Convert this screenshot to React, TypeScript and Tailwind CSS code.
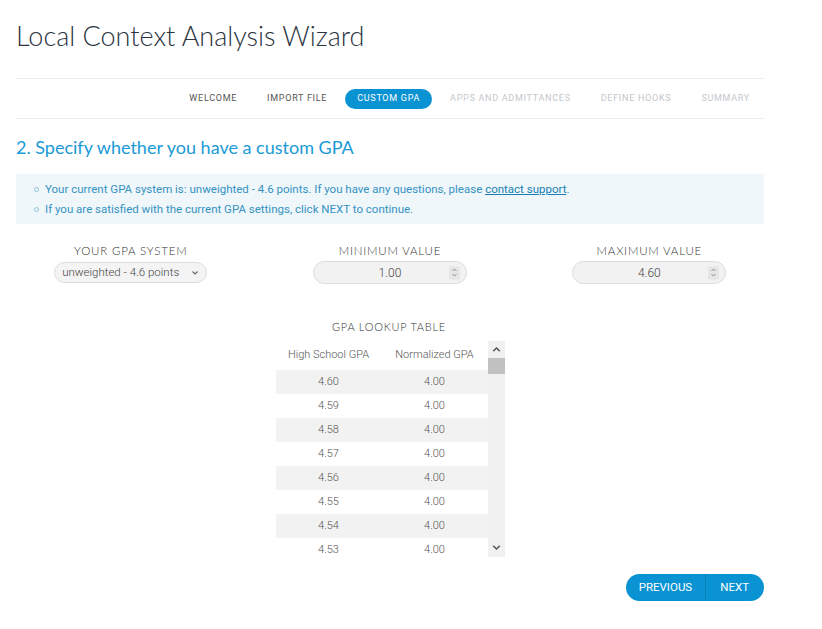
const steps = [
  { label: "WELCOME", state: "done" },
  { label: "IMPORT FILE", state: "done" },
  { label: "CUSTOM GPA", state: "active" },
  { label: "APPS AND ADMITTANCES", state: "todo" },
  { label: "DEFINE HOOKS", state: "todo" },
  { label: "SUMMARY", state: "todo" },
];

const rows = ["4.60", "4.59", "4.58", "4.57", "4.56", "4.55", "4.54", "4.53"];

function Spinner() {
  return (
    <span className="absolute right-[6px] top-1/2 flex h-[13px] w-[11px] -translate-y-1/2 flex-col items-center justify-center bg-[#e6e6e6]">
      <svg width="7" height="10" viewBox="0 0 7 10" fill="none" stroke="#8a8a8a" strokeWidth="1">
        <path d="M1.5 3.5 L3.5 1.5 L5.5 3.5" />
        <path d="M1.5 6.5 L3.5 8.5 L5.5 6.5" />
      </svg>
    </span>
  );
}

function NumberBox({ value }: { value: string }) {
  return (
    <div className="relative mx-auto flex h-[23px] w-[154px] items-center justify-center rounded-full border border-[#dcdcdc] bg-[#f2f2f2] text-[12px] font-light text-[#444]">
      {value}
      <Spinner />
    </div>
  );
}

export default function App() {
  return (
    <div className="min-h-screen w-[822px] bg-white font-['Roboto',sans-serif]">
      <div className="ml-[16px] w-[748px] pt-[21px]">
        <h1 className="font-['Lato',sans-serif] text-[27px] font-light leading-[30px] text-[#2b3340]">
          Local Context Analysis Wizard
        </h1>

        <nav className="mt-[27px] flex h-[41px] items-center justify-end gap-[6px] border-y border-[#ececec] pr-[2px]">
          {steps.map((s) => (
            <span
              key={s.label}
              className={
                s.state === "active"
                  ? "flex h-[20px] items-center rounded-full bg-[#0a93d2] px-[12px] text-[9px] tracking-[0.08em] text-white"
                  : s.state === "done"
                    ? "px-[12px] text-[9px] tracking-[0.08em] text-[#555]"
                    : "px-[12px] text-[9px] tracking-[0.08em] text-[#c3c7cc]"
              }
            >
              {s.label}
            </span>
          ))}
        </nav>

        <h2 className="mt-[16px] font-['Lato',sans-serif] text-[18px] leading-[24px] text-[#1a9ad6]">
          2. Specify whether you have a custom GPA
        </h2>

        <div className="mt-[15px] h-[50px] bg-[#eff7fa] pl-[18px] pt-[5px] text-[11.5px] leading-[20px] text-[#3592c2]">
          <ul>
            <li className="flex h-[20px] items-center gap-[6px]">
              <span className="inline-block h-[5px] w-[5px] rounded-full border border-[#8fc3dc]" />
              <span className="leading-[20px]">
                Your current GPA system is: unweighted - 4.6 points. If you have any questions, please{" "}
                <span className="text-[#1a7fb3] underline">contact support</span>.
              </span>
            </li>
            <li className="flex h-[20px] items-center gap-[6px]">
              <span className="inline-block h-[5px] w-[5px] rounded-full border border-[#8fc3dc]" />
              <span className="leading-[20px]">If you are satisfied with the current GPA settings, click NEXT to continue.</span>
            </li>
          </ul>
        </div>

        <div className="-mx-[15px] mt-[18px] grid grid-cols-3">
          <div className="flex flex-col items-center">
            <div className="font-['Lato',sans-serif] text-[11.5px] font-light tracking-[0.07em] text-[#333]">YOUR GPA SYSTEM</div>
            <div className="mt-[3px] flex h-[21px] w-[153px] items-center justify-between rounded-full border border-[#dcdcdc] bg-[#f4f4f4] pl-[7px] pr-[7px] text-[11.5px] font-light text-[#444]">
              <span>unweighted - 4.6 points</span>
              <svg width="8" height="6" viewBox="0 0 8 6" fill="none" stroke="#666" strokeWidth="1.1">
                <path d="M1.5 1.5 L4 4 L6.5 1.5" />
              </svg>
            </div>
          </div>
          <div className="flex flex-col items-center">
            <div className="font-['Lato',sans-serif] text-[11.5px] font-light tracking-[0.07em] text-[#333]">MINIMUM VALUE</div>
            <div className="mt-[2px] w-full">
              <NumberBox value="1.00" />
            </div>
          </div>
          <div className="flex flex-col items-center">
            <div className="font-['Lato',sans-serif] text-[11.5px] font-light tracking-[0.07em] text-[#333]">MAXIMUM VALUE</div>
            <div className="mt-[2px] w-full">
              <NumberBox value="4.60" />
            </div>
          </div>
        </div>

        <div className="mt-[35px] flex flex-col items-center">
          <div className="ml-[-2px] font-['Lato',sans-serif] text-[11px] font-light tracking-[0.07em] text-[#333]">GPA LOOKUP TABLE</div>
          <div className="mt-[5px] flex h-[216px] w-[229px] overflow-hidden">
            <div className="w-[212px] text-[11px] font-light text-[#555]">
              <div className="flex h-[29px] items-center">
                <span className="w-[106px] text-center">High School GPA</span>
                <span className="w-[106px] text-center">Normalized GPA</span>
              </div>
              {rows.map((r, i) => (
                <div key={r} className={`flex h-[24px] items-center ${i % 2 === 0 ? "bg-[#f2f2f2]" : "bg-white"}`}>
                  <span className="w-[106px] text-center">{r}</span>
                  <span className="w-[106px] text-center">4.00</span>
                </div>
              ))}
            </div>
            <div className="flex w-[17px] flex-col bg-[#f1f1f1]">
              <div className="flex h-[17px] items-center justify-center">
                <svg width="9" height="6" viewBox="0 0 9 6" fill="#505050">
                  <path d="M0.5 5 L4.5 1 L8.5 5 L7 5.5 L4.5 3 L2 5.5 Z" />
                </svg>
              </div>
              <div className="h-[16px] bg-[#c1c1c1]" />
              <div className="flex-1" />
              <div className="flex h-[17px] items-center justify-center">
                <svg width="9" height="6" viewBox="0 0 9 6" fill="#505050">
                  <path d="M0.5 1 L4.5 5 L8.5 1 L7 0.5 L4.5 3 L2 0.5 Z" />
                </svg>
              </div>
            </div>
          </div>
        </div>

        <div className="mt-[17px] flex justify-end">
          <div className="flex h-[27px] overflow-hidden rounded-full bg-[#0a93d2] text-[11.5px] text-white">
            <span className="flex items-center border-r border-[#0880b8] pl-[13px] pr-[13px]">PREVIOUS</span>
            <span className="flex items-center pl-[14px] pr-[15px]">NEXT</span>
          </div>
        </div>
      </div>
    </div>
  );
}
